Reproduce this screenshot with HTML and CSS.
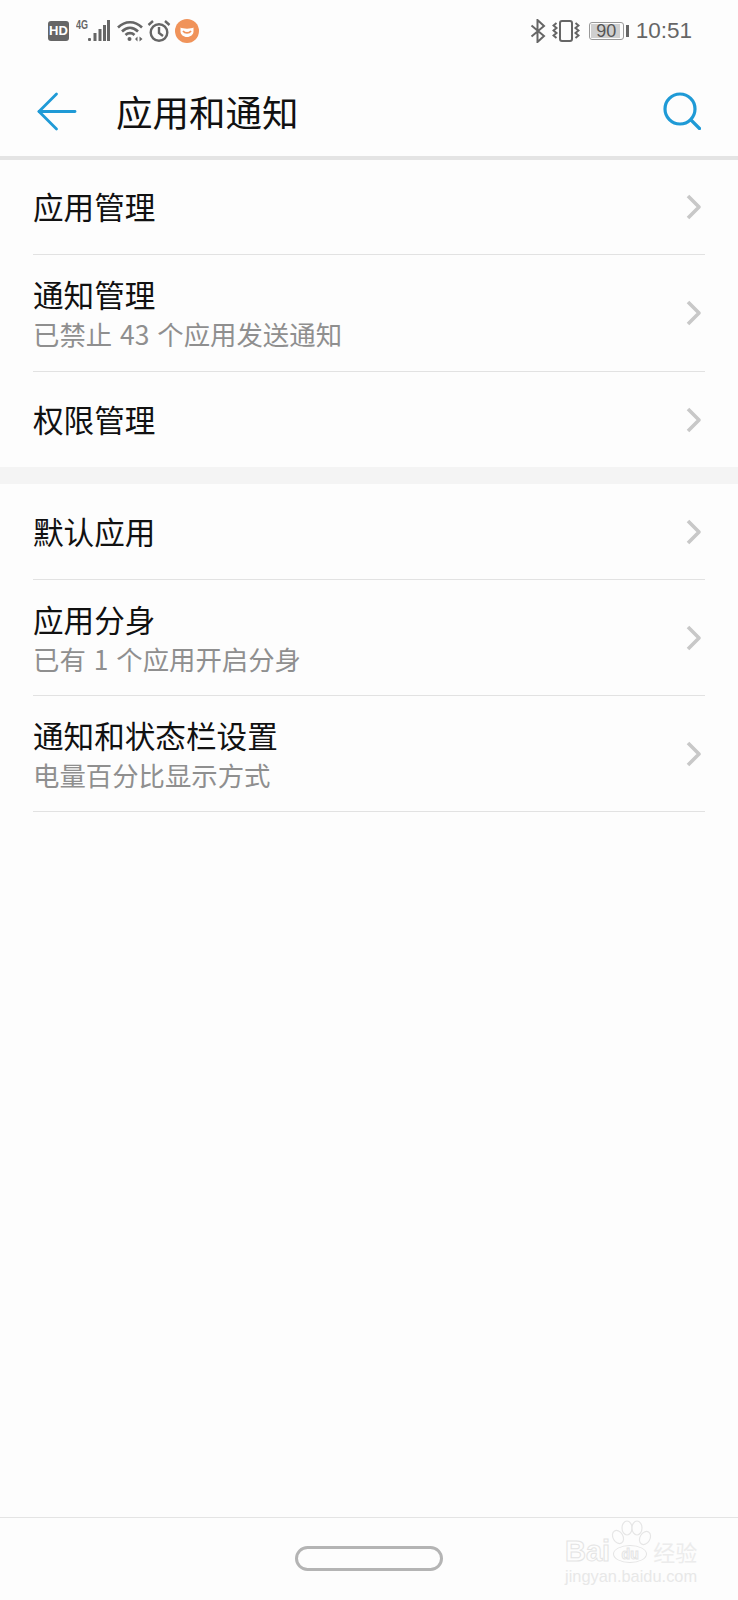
FILE: index.html
```html
<!DOCTYPE html>
<html>
<head>
<meta charset="utf-8">
<title>应用和通知</title>
<link rel="stylesheet" href="styles.css">
</head>
<body>
<div class="phone">
  <div class="status-bar">
    <div class="status-left">
      <span class="hd">HD</span>
      <svg class="signal" width="34" height="24" viewBox="0 0 34 24">
        <text x="0" y="10" class="net" textLength="12" lengthAdjust="spacingAndGlyphs">4G</text>
        <g fill="#666">
          <rect x="12" y="19" width="3" height="3" rx="1"/>
          <rect x="17.500" y="14" width="3" height="8"/>
          <rect x="22.500" y="10" width="3" height="12"/>
          <rect x="27" y="6" width="3" height="16"/>
          <rect x="31" y="1" width="3" height="21"/>
        </g>
      </svg>
      <svg class="wifi" width="28" height="22" viewBox="0 0 28 22" fill="none" stroke="#666" stroke-width="2.600">
        <path d="M1 7.500C8 .5 18 .5 25 7.500"/>
        <path d="M5 11.500C10 6.500 16 6.500 21 11.500"/>
        <path d="M8.500 15C11 12.500 15 12.500 17.500 15"/>
        <circle cx="12.500" cy="19" r="2" fill="#666" stroke="none"/>
        <path d="M20.500 16.500v5l-2.500-2.500zM22.500 16.500v5l3-2.500z" fill="#666" stroke="none"/>
      </svg>
      <svg class="alarm" width="24" height="24" viewBox="0 0 24 24" fill="none" stroke="#666" stroke-width="2.400">
        <circle cx="12" cy="13.500" r="8.300"/>
        <path d="M12 8v6l4 3"/>
        <path d="M1.500 6L6 2M22.500 6L18 2"/>
      </svg>
      <svg class="app-badge" width="24" height="24" viewBox="0 0 24 24">
        <circle cx="12" cy="12" r="12" fill="#f0935a"/>
        <path d="M5.500 8.500c2 1.500 11 1.500 13 0v4c0 3-3 5.500-6.500 5.500s-6.500-2.500-6.500-5.500z" fill="#fff"/>
        <path d="M8 12c2 2.500 6 2.500 8 0" fill="none" stroke="#f0935a" stroke-width="1.800"/>
      </svg>
    </div>
    <div class="status-right">
      <svg width="16" height="24" viewBox="0 0 16 24" fill="none" stroke="#666" stroke-width="2">
        <path d="M1.500 6.500L14 17l-6.500 6V1L14 7 1.500 17.500"/>
      </svg>
      <svg class="vibrate" width="28" height="22" viewBox="0 0 28 22" fill="none" stroke="#666" stroke-width="2">
        <rect x="8" y="1" width="12" height="20" rx="2"/>
        <path d="M4.500 3l-3 2.500 3 2.500-3 2.500 3 2.500-3 2.500 3 2.500"/>
        <path d="M23.500 3l3 2.500-3 2.500 3 2.500-3 2.500 3 2.500-3 2.500"/>
      </svg>
      <div class="battery">
        <div class="battery-body"><span class="battery-fill"></span><span class="battery-num">90</span></div>
        <span class="battery-cap"></span>
      </div>
      <span class="clock">10:51</span>
    </div>
  </div>

  <div class="title-bar">
    <svg class="back" width="40" height="40" viewBox="0 0 40 40" fill="none" stroke="#1f9ad6" stroke-width="2.800" stroke-linecap="round" stroke-linejoin="round">
      <path d="M38 20.500H2"/>
      <path d="M19.500 3L2 20.500 19.500 38"/>
    </svg>
    <h1 class="title">应用和通知</h1>
    <svg class="search" width="38" height="38" viewBox="0 0 38 38" fill="none" stroke="#1f9ad6" stroke-width="3.200" stroke-linecap="round">
      <circle cx="17" cy="17" r="15"/>
      <path d="M28 28l8.500 8.500"/>
    </svg>
  </div>

  <div class="group">
    <div class="row"><div class="row-text"><div class="row-title">应用管理</div></div><svg class="chevron" width="18" height="28" viewBox="0 0 18 28"><path d="M3 3l11 11L3 25"/></svg></div>
    <div class="row tall mid"><div class="row-text"><div class="row-title">通知管理</div><div class="row-sub">已禁止 43 个应用发送通知</div></div><svg class="chevron" width="18" height="28" viewBox="0 0 18 28"><path d="M3 3l11 11L3 25"/></svg></div>
    <div class="row last"><div class="row-text"><div class="row-title">权限管理</div></div><svg class="chevron" width="18" height="28" viewBox="0 0 18 28"><path d="M3 3l11 11L3 25"/></svg></div>
  </div>
  <div class="group-gap"></div>
  <div class="group">
    <div class="row lead"><div class="row-text"><div class="row-title">默认应用</div></div><svg class="chevron" width="18" height="28" viewBox="0 0 18 28"><path d="M3 3l11 11L3 25"/></svg></div>
    <div class="row tall"><div class="row-text"><div class="row-title">应用分身</div><div class="row-sub">已有 1 个应用开启分身</div></div><svg class="chevron" width="18" height="28" viewBox="0 0 18 28"><path d="M3 3l11 11L3 25"/></svg></div>
    <div class="row tall"><div class="row-text"><div class="row-title">通知和状态栏设置</div><div class="row-sub">电量百分比显示方式</div></div><svg class="chevron" width="18" height="28" viewBox="0 0 18 28"><path d="M3 3l11 11L3 25"/></svg></div>
  </div>

  <div class="spacer"></div>

  <div class="nav-bar">
    <span class="home-pill"></span>
    <div class="watermark">
      <svg class="paw" width="44" height="30" viewBox="0 0 44 30" fill="#fdfdfd" stroke="#e6e6e6" stroke-width="1.200">
        <ellipse cx="8" cy="17" rx="5" ry="7" transform="rotate(-30 8 17)"/>
        <ellipse cx="17" cy="8" rx="5" ry="7"/>
        <ellipse cx="27" cy="8" rx="5" ry="7"/>
        <ellipse cx="35" cy="18" rx="5" ry="7" transform="rotate(30 35 18)"/>
      </svg>
      <div class="wm-main"><span>Bai</span><span class="wm-du">du</span><span class="wm-cn">经验</span></div>
      <div class="wm-url">jingyan.baidu.com</div>
    </div>
  </div>
</div>
</body>
</html>
```

FILE: styles.css
```css
* {
  box-sizing: border-box;
}
body {
  margin: 0;
  background-color: #fdfdfd;
  font-family: "Noto Sans CJK SC", "Liberation Sans", sans-serif;
}
.phone {
  width: 738px;
  height: 1600px;
  display: flex;
  flex-direction: column;
  overflow: hidden;
}

/* status bar */
.status-bar {
  height: 62px;
  padding: 0 46px 0 48px;
  display: flex;
  align-items: center;
  justify-content: space-between;
}
.status-left,
.status-right {
  display: flex;
  align-items: center;
}
.hd {
  width: 21px;
  height: 20px;
  border-radius: 3px;
  background-color: #666;
  color: #fff;
  font-family: "Liberation Sans", sans-serif;
  font-size: 13px;
  font-weight: bold;
  line-height: 20px;
  text-align: center;
}
.signal {
  margin-left: 7px;
}
.net {
  font-family: "Liberation Sans", sans-serif;
  font-size: 12px;
  font-weight: bold;
  fill: #666;
}
.wifi {
  margin-left: 7px;
}
.alarm {
  margin-left: 2px;
}
.app-badge {
  margin-left: 4px;
}
.vibrate {
  margin-left: 6px;
}
.battery {
  margin-left: 9px;
  display: flex;
  align-items: center;
}
.battery-body {
  position: relative;
  width: 35px;
  height: 18px;
  border: 1px solid #999;
  border-radius: 3px;
  padding: 1px;
  overflow: hidden;
}
.battery-fill {
  display: block;
  width: 29px;
  height: 100%;
  background-color: #cfcfcf;
}
.battery-num {
  position: absolute;
  left: 0;
  right: 0;
  top: 0;
  font-family: "Liberation Sans", sans-serif;
  font-size: 18px;
  line-height: 16px;
  text-align: center;
  color: #555;
}
.battery-cap {
  width: 3px;
  height: 12px;
  margin-left: 2px;
  background-color: #666;
}
.clock {
  margin-left: 7px;
  font-family: "Liberation Sans", sans-serif;
  font-size: 22.500px;
  color: #666;
}

/* title bar */
.title-bar {
  height: 98px;
  padding: 4px 37px 0;
  display: flex;
  align-items: center;
  border-bottom: 4px solid #e4e4e4;
}
.title {
  flex: 1;
  margin: 2px 0 0 39px;
  font-size: 36.500px;
  font-weight: normal;
  line-height: 48px;
  color: #111;
}

/* list */
.group {
  padding: 0 33px;
}
.group-gap {
  height: 17px;
  background-color: #f4f4f4;
}
.row {
  height: 95px;
  display: flex;
  align-items: center;
  justify-content: space-between;
  border-bottom: 1px solid #e2e2e2;
}
.row.lead {
  height: 96px;
}
.row.tall {
  height: 116px;
}
.row.mid {
  height: 117px;
}
.row.last {
  border-bottom: none;
}
.row-title {
  margin-bottom: 2px;
  font-size: 30.600px;
  line-height: 40px;
  color: #111;
}
.row-sub {
  font-size: 26.400px;
  line-height: 36px;
  word-spacing: 2px;
  color: #8f8f8f;
}
.chevron {
  fill: none;
  stroke: #c8c8c8;
  stroke-width: 3.600;
  stroke-linejoin: round;
  margin-right: 2px;
}

.spacer {
  flex: 1;
}

/* bottom nav */
.nav-bar {
  position: relative;
  height: 83px;
  border-top: 1px solid #e4e4e4;
  display: flex;
  justify-content: center;
  padding-top: 28px;
}
.home-pill {
  width: 148px;
  height: 25px;
  border: 3px solid #b4b4b4;
  border-radius: 13px;
}
.watermark {
  position: absolute;
  left: 565px;
  top: 2px;
  width: 135px;
  height: 70px;
}
.paw {
  position: absolute;
  left: 45px;
  top: 0;
}
.wm-main {
  position: absolute;
  left: 0;
  top: 16px;
  display: flex;
  align-items: center;
  height: 30px;
  font-family: "Liberation Sans", sans-serif;
  font-size: 29px;
  font-weight: bold;
  color: #fdfdfd;
  -webkit-text-stroke: 1px #e4e4e4;
  white-space: nowrap;
}
.wm-du {
  width: 34px;
  height: 18px;
  margin: 6px 0 0 3px;
  border: 1px solid #e4e4e4;
  border-radius: 50%;
  font-size: 14px;
  line-height: 16px;
  text-align: center;
}
.wm-cn {
  margin-left: 6px;
  font-family: "Noto Sans CJK SC", sans-serif;
  font-size: 22px;
  font-weight: normal;
  color: #ececec;
  -webkit-text-stroke: 0;
}
.wm-url {
  position: absolute;
  left: 0;
  top: 47px;
  font-family: "Liberation Sans", sans-serif;
  font-size: 16.400px;
  line-height: 18px;
  color: #e8e8e8;
  white-space: nowrap;
}
```
